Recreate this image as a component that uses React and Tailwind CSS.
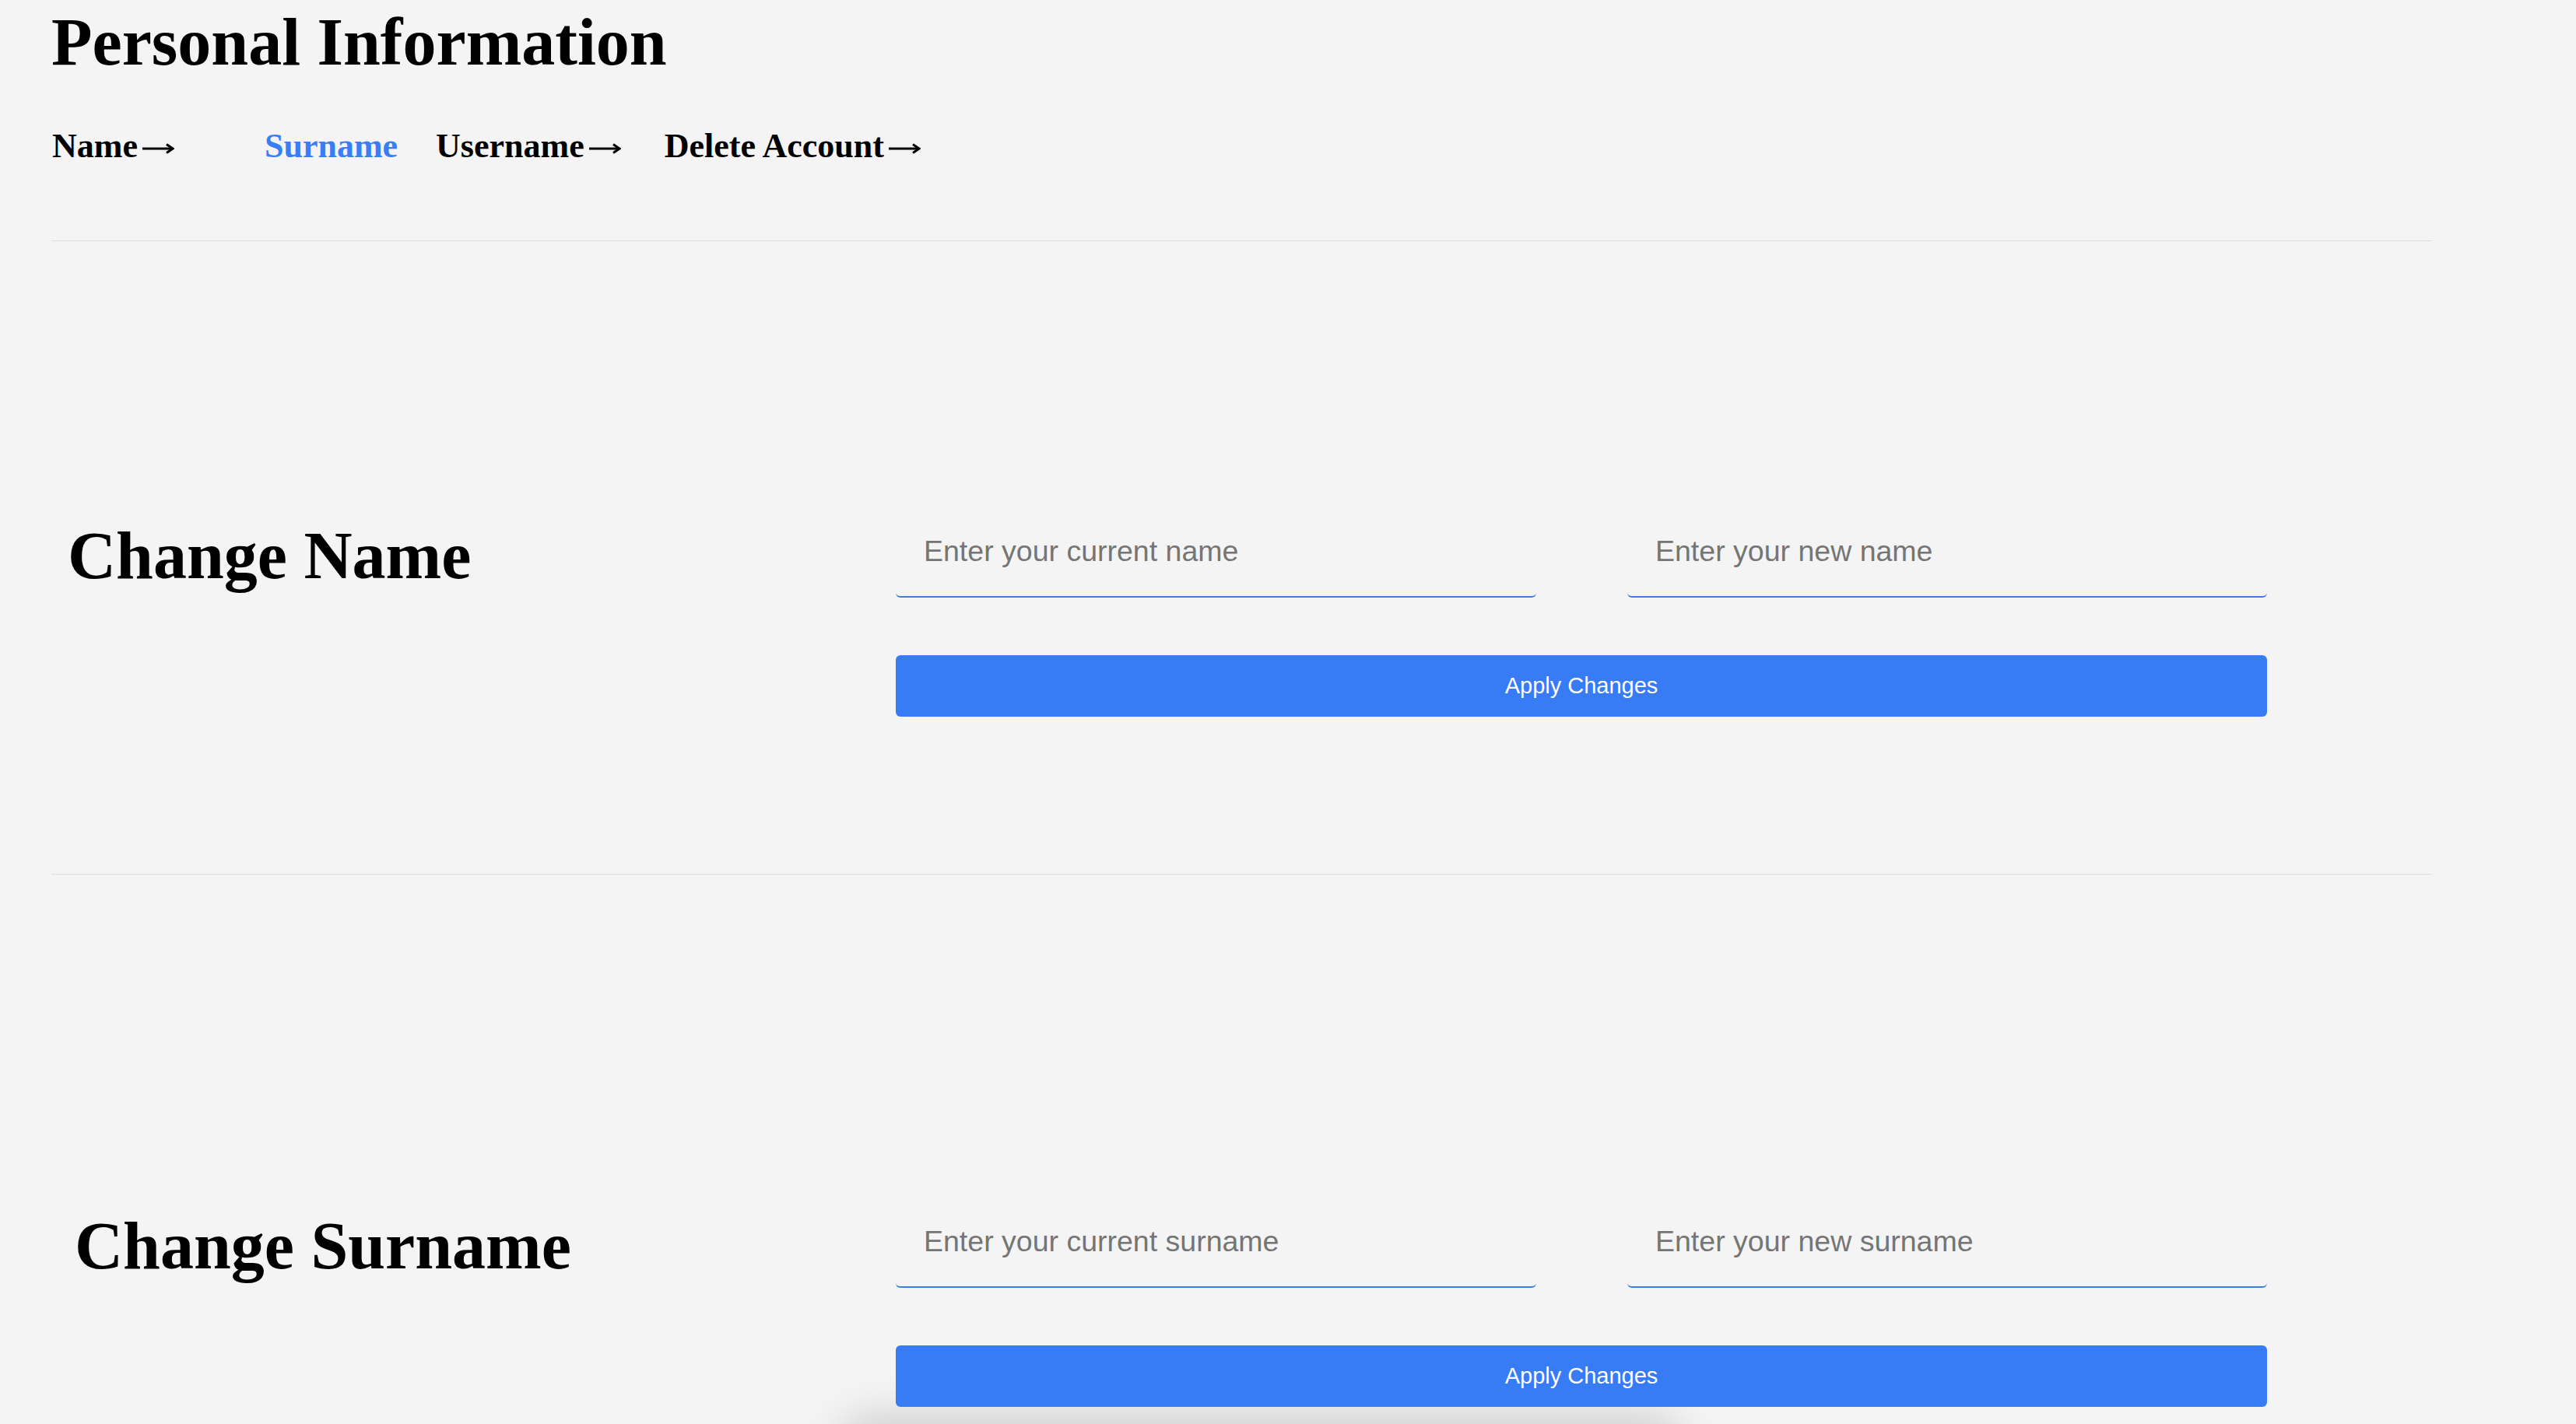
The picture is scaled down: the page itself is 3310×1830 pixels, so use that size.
import React from "react";

const serif = "font-['Liberation_Serif','Times_New_Roman',serif]";
const sans = "font-['Liberation_Sans',Arial,sans-serif]";

function Arrow() {
  return (
    <svg
      width="42"
      height="16"
      viewBox="0 0 42 16"
      className="ml-[5px] inline-block align-[3px]"
      fill="none"
      stroke="currentColor"
      strokeWidth="3"
    >
      <path d="M1 8H39" />
      <path d="M32 2.5L40 8L32 13.5" strokeLinejoin="miter" />
    </svg>
  );
}

function Section({ title, headingMl, pt, first, second }) {
  return (
    <section className={`flex ${pt}`}>
      <div className="w-[1085px] shrink-0">
        <h2 className={`${serif} ${headingMl} mt-[21px] text-[86px] leading-none font-bold text-black`}>
          {title}
        </h2>
      </div>
      <div className="w-[1762px] shrink-0">
        <div className="flex gap-[117px]">
          <input
            placeholder={first}
            className={`${sans} h-[118px] w-[823px] rounded-[6px] border-b-2 border-[#3b7be6] bg-transparent pl-[36px] text-[37.5px] text-black outline-none placeholder:text-[#757575]`}
          />
          <input
            placeholder={second}
            className={`${sans} h-[118px] w-[822px] rounded-[6px] border-b-2 border-[#3b7be6] bg-transparent pl-[36px] text-[37.5px] text-black outline-none placeholder:text-[#757575]`}
          />
        </div>
        <button
          className={`${sans} relative mt-[74px] flex h-[79px] w-full items-center justify-center rounded-[6px] bg-[#377bf5] text-[29px] text-white`}
        >
          Apply Changes
        </button>
      </div>
    </section>
  );
}

export default function App() {
  return (
    <div className="relative h-[1830px] w-full overflow-hidden bg-[#f4f4f4]">
      <div className="fixed left-[1100px] top-[1842px] h-[120px] w-[1040px] rounded-[12px] bg-white shadow-[0_0_60px_15px_rgba(0,0,0,0.2)]" />
      <div className="ml-[66px] w-[3059px]">
        <h1 className={`${serif} mt-[11px] text-[86px] leading-none font-bold text-black`}>
          Personal Information
        </h1>
        <nav className={`${serif} mt-[69px] flex text-[44px] leading-none font-bold text-black`}>
          <a className="ml-[1px]">
            Name
            <Arrow />
          </a>
          <a className="ml-[116px] text-[#3a7ef6]">Surname</a>
          <a className="ml-[49px]">
            Username
            <Arrow />
          </a>
          <a className="ml-[56px]">
            Delete Account
            <Arrow />
          </a>
        </nav>
        <div className="mt-[99px] h-px w-full bg-[#dcdcdc]" />
        <Section
          title="Change Name"
          headingMl="ml-[21px]"
          pt="pt-[340px]"
          first="Enter your current name"
          second="Enter your new name"
        />
        <div className="mt-[202px] h-px w-full bg-[#dcdcdc]" />
        <Section
          title="Change Surname"
          headingMl="ml-[30px]"
          pt="pt-[413px]"
          first="Enter your current surname"
          second="Enter your new surname"
        />
      </div>
    </div>
  );
}
